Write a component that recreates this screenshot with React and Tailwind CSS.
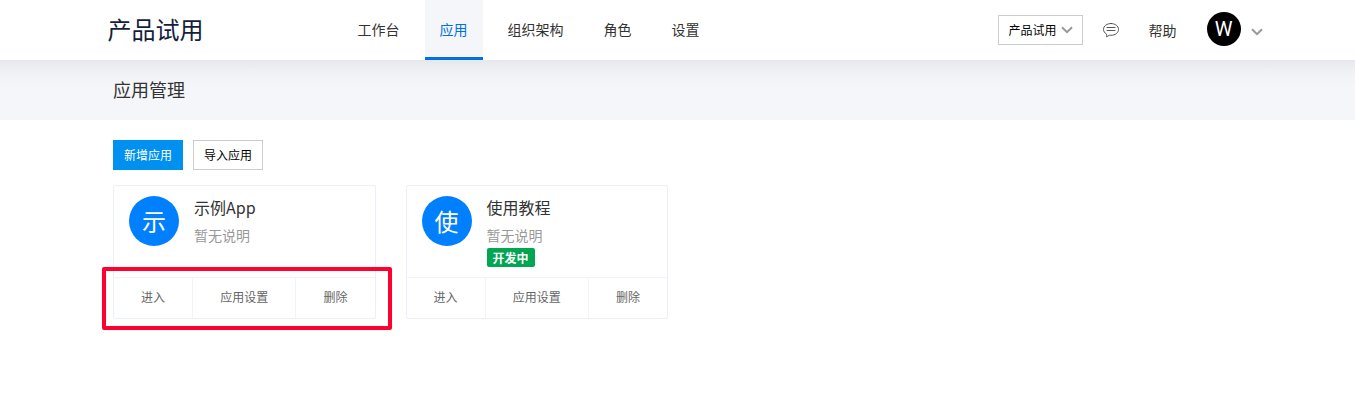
import React, { useState } from 'react';
import clsx from 'clsx';

const navItems = ['工作台', '应用', '组织架构', '角色', '设置'];

const apps = [
  { name: '示例App', desc: '暂无说明', highlighted: true },
  { name: '使用教程', desc: '暂无说明', status: '开发中' },
];

const Chevron = ({ className }) => (
  <svg viewBox="0 0 12 8" fill="none" stroke="#999" strokeWidth="2" className={className} aria-hidden="true">
    <path d="M1 1.2 6 6.2 11 1.2" />
  </svg>
);

const ChatIcon = () => (
  <svg viewBox="0 0 16 16" fill="none" stroke="#444" strokeWidth="0.9" strokeLinecap="round" strokeLinejoin="round" className="h-4 w-4" aria-hidden="true">
    <path d="M8 1.500c4.200 0 7.500 2.500 7.500 5.900S12.200 13.300 8 13.300c-.5 0-1 0-1.500-.1L3.500 14.800c.2-.8.200-1.700 0-2.700C1.700 11 .5 9.300.5 7.400.5 4 3.800 1.500 8 1.500z" />
    <path d="M4 5.500h8M4 8.500h8" />
  </svg>
);

const Header = () => {
  const [active, setActive] = useState('应用');

  return (
    <header className="bg-white">
      <div className="mx-auto flex h-[60px] max-w-[1170px] items-center pl-[15px]">
        <a href="#home" className="w-[235px] shrink-0 pb-[2px] text-2xl text-[#141e3c]">
          产品试用
        </a>
        <nav className="flex h-full gap-[10px]">
          {navItems.map((item) => (
            <a
              key={item}
              href="#nav"
              onClick={() => setActive(item)}
              className={clsx(
                'flex items-center whitespace-nowrap border-b-3 px-[15px] pt-px text-sm',
                item === active
                  ? 'border-b-[#0070e8] bg-[#f5f6fa] text-[#0070e8]'
                  : 'border-b-transparent text-[#333]'
              )}
            >
              {item}
            </a>
          ))}
        </nav>
        <div className="ml-auto flex items-center">
          <div className="relative">
            <select
              aria-label="切换产品"
              className="h-[30px] w-[85px] appearance-none border border-[#ccc] bg-white pl-[10px] text-xs text-black"
            >
              <option>产品试用</option>
            </select>
            <Chevron className="pointer-events-none absolute right-[10px] top-[11px] h-2 w-3" />
          </div>
          <button type="button" aria-label="消息" className="ml-5">
            <ChatIcon />
          </button>
          <a href="#help" className="ml-[30px] text-sm text-[#333]">
            帮助
          </a>
          <button type="button" aria-label="用户菜单" className="ml-[30px] flex items-center gap-[10px]">
            <span className="mb-[2px] flex h-[34px] w-[34px] items-center justify-center rounded-full bg-black font-[Roboto,sans-serif] text-xl text-white">
              W
            </span>
            <Chevron className="mt-[3px] h-2 w-3" />
          </button>
        </div>
      </div>
    </header>
  );
};

const AppCard = ({ app }) => (
  <article className="rounded-xs border border-[#ebeff8] bg-white">
    <div className="flex h-[91px] gap-[15px] px-[15px] pt-[10px]">
      <div className="flex h-[50px] w-[50px] shrink-0 items-center justify-center rounded-full bg-[#0080ff] text-2xl text-white">
        {app.name[0]}
      </div>
      <div>
        <h2 className="text-base/[22px] text-[#333]">{app.name}</h2>
        <p className="mt-[7px] text-sm text-[#999]">{app.desc}</p>
        {app.status && (
          <span className="mt-[3px] flex h-[19px] w-12 items-center justify-center rounded-xs bg-[#00a650] text-xs font-bold text-white">
            {app.status}
          </span>
        )}
      </div>
    </div>
    <div className="relative">
      <div className="flex h-[41px] divide-x divide-[#f2f4fa] border-t border-[#f2f4fa] text-xs text-[#666]">
        <button type="button" className="flex-auto pb-[2px]">进入</button>
        <button type="button" className="flex-auto pb-[2px]">应用设置</button>
        <button type="button" className="flex-auto pb-[2px]">删除</button>
      </div>
      {app.highlighted && (
        <div className="pointer-events-none absolute -bottom-3 -left-3 -right-[17px] -top-[10px] rounded-xs border-4 border-[#ff0030]" />
      )}
    </div>
  </article>
);

const App = () => (
  <div className="bg-white font-['Noto_Sans_CJK_SC',sans-serif]">
    <Header />
    <div className="bg-[#f5f6fa] bg-linear-to-b from-[#e6e8eb] via-[#f0f1f5] via-20% to-[#f5f6fa] to-45%">
      <div className="mx-auto flex h-[60px] max-w-[1169px] items-center pb-[2px] pl-5">
        <h1 className="text-lg text-[#333]">应用管理</h1>
      </div>
    </div>
    <main className="mx-auto max-w-[1169px] pb-5 pl-5 pr-[9px] pt-5">
      <div className="flex gap-[10px] text-xs">
        <button type="button" className="h-[30px] w-[70px] bg-[#0090f0] text-white">
          新增应用
        </button>
        <button type="button" className="h-[30px] w-[70px] border border-[#ccc] text-black">
          导入应用
        </button>
      </div>
      <div className="mt-[15px] grid grid-cols-4 gap-[30px]">
        {apps.map((app) => (
          <AppCard key={app.name} app={app} />
        ))}
      </div>
    </main>
  </div>
);

export default App;
